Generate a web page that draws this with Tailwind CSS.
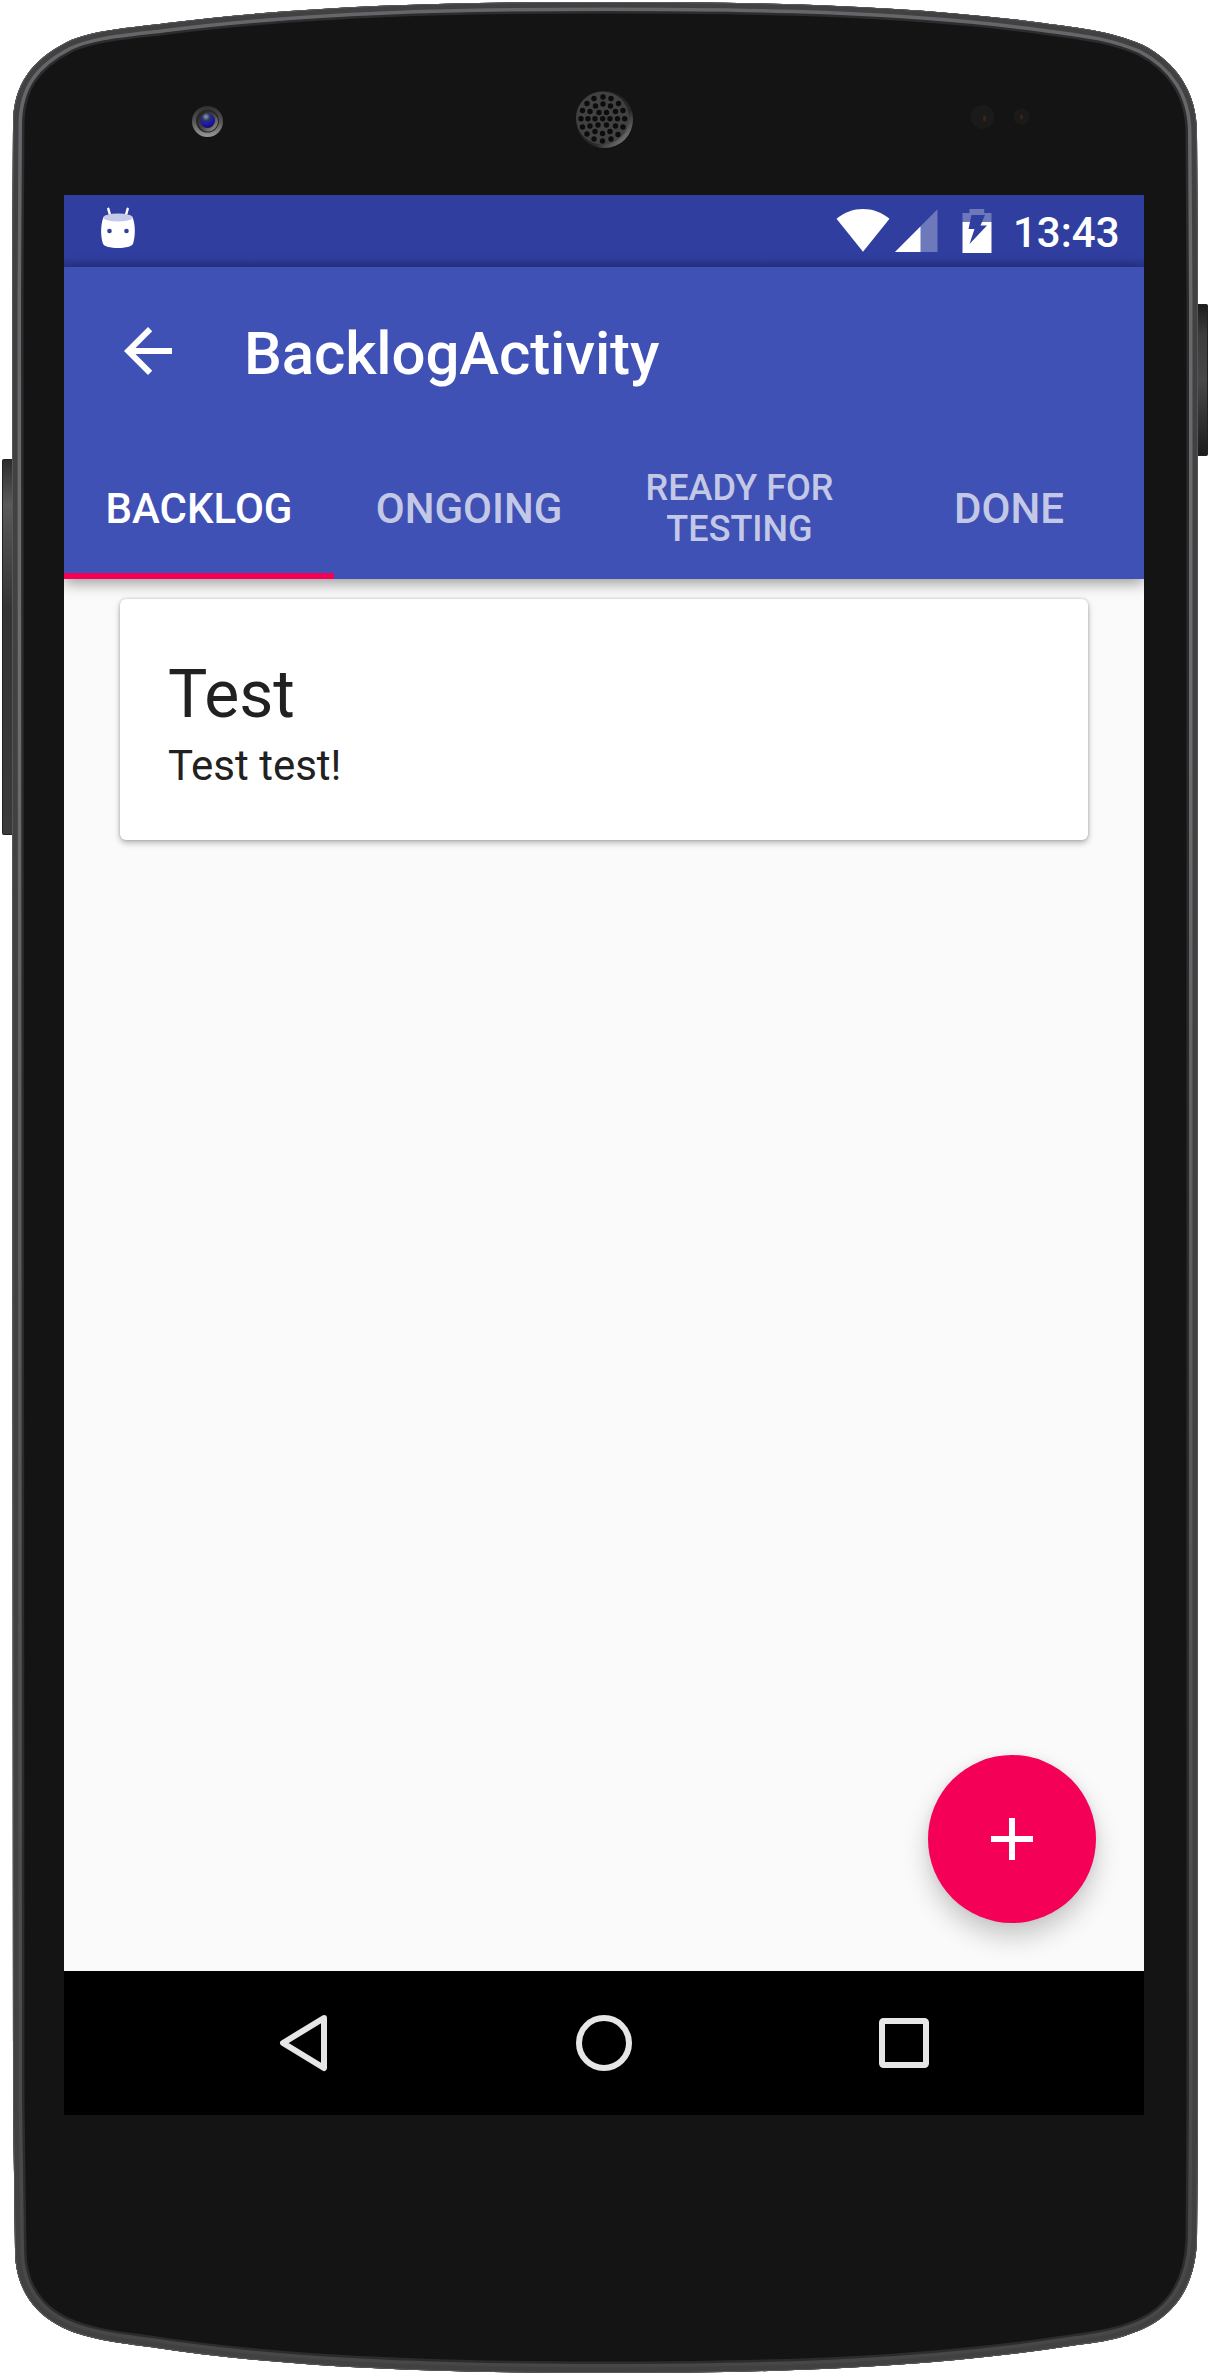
<!DOCTYPE html>
<html lang="en">
<head>
<meta charset="utf-8">
<title>BacklogActivity</title>
<script src="https://cdn.jsdelivr.net/npm/@tailwindcss/browser@4"></script>
</head>
<body class="bg-white font-[Roboto,sans-serif] overflow-hidden">
<div class="relative w-[1210px] h-[2375px] overflow-hidden px-16 pt-[195px]">
  <!-- Device shell -->
  <svg class="absolute left-0 top-0" width="1210" height="2375" viewBox="0 0 1210 2375" aria-hidden="true">
    <defs>
      <path id="shell" d="M12 300 L13 125 C13 84 32 60 67 42 C92 30 128 28 167 23 C310 5 460 2 605 2 C750 2 900 4 1043 23 C1078 28 1108 30 1143 45 C1176 62 1197 92 1197 133 L1198 300 V2100 L1197 2240 C1195 2292 1170 2321 1130 2334 C1112 2341 1092 2343 1077 2345 C930 2368 780 2373 605 2373 C430 2373 280 2367 150 2347 C128 2344 108 2342 90 2337 C46 2327 15 2299 15 2250 L13 2100 Z"/>
      <clipPath id="shellClip"><use href="#shell"/></clipPath>
      <linearGradient id="rim" x1="0" y1="0" x2="0" y2="1">
        <stop offset="0" stop-color="#66666a"/><stop offset=".3" stop-color="#6c6c71"/><stop offset=".75" stop-color="#505052"/><stop offset="1" stop-color="#474747"/>
      </linearGradient>
      <linearGradient id="key" x1="0" y1="0" x2="0" y2="1">
        <stop offset="0" stop-color="#2c2c2c"/><stop offset=".12" stop-color="#5a5a5a"/><stop offset=".4" stop-color="#333"/><stop offset="1" stop-color="#3a3a3a"/>
      </linearGradient>
      <linearGradient id="keyRight" x1="0" y1="0" x2="0" y2="1">
        <stop offset="0" stop-color="#1c1c1c"/><stop offset=".2" stop-color="#3c3c3c"/><stop offset=".5" stop-color="#484848"/><stop offset="1" stop-color="#1c1c1c"/>
      </linearGradient>
      <linearGradient id="cam" x1="0" y1="0" x2="0" y2="1">
        <stop offset="0" stop-color="#303030"/><stop offset=".5" stop-color="#555"/><stop offset="1" stop-color="#999"/>
      </linearGradient>
      <linearGradient id="camInner" x1="0" y1="0" x2="1" y2="1">
        <stop offset="0" stop-color="#1c1c1c"/><stop offset=".5" stop-color="#4a4542"/><stop offset="1" stop-color="#a39b94"/>
      </linearGradient>
      <radialGradient id="lens" cx=".4" cy=".25" r=".75">
        <stop offset="0" stop-color="#8fa0a8"/><stop offset=".35" stop-color="#2c3566"/><stop offset=".75" stop-color="#1a12b4"/><stop offset="1" stop-color="#17114a"/>
      </radialGradient>
      <linearGradient id="grille" x1="0" y1="0" x2="1" y2="1">
        <stop offset="0" stop-color="#161616"/><stop offset=".65" stop-color="#2a2a2a"/><stop offset="1" stop-color="#a0a0a0"/>
      </linearGradient>
    </defs>
    <rect x="2.500" y="459.500" width="12" height="375" rx="1" fill="url(#key)" stroke="#222" stroke-width="1"/>
    <rect x="1195.500" y="304.500" width="12" height="151" rx="1" fill="url(#keyRight)" stroke="#222" stroke-width="1"/>
    <use href="#shell" fill="#141414"/>
    <g clip-path="url(#shellClip)" fill="none">
      <use href="#shell" stroke="#2c2c2d" stroke-width="23"/>
      <use href="#shell" stroke="url(#rim)" stroke-width="18"/>
      <use href="#shell" stroke="#414142" stroke-width="11"/>
      <use href="#shell" stroke="#5c5c5e" stroke-width="1.500"/>
    </g>
    <circle cx="207.500" cy="121.500" r="15.500" fill="url(#cam)"/>
    <circle cx="207.500" cy="121" r="11.500" fill="#2a2826"/>
    <circle cx="208" cy="121.500" r="10" fill="url(#camInner)"/>
    <circle cx="207.500" cy="120.500" r="7.500" fill="url(#lens)"/>
    <circle cx="604.500" cy="119.500" r="28.500" fill="url(#grille)"/>
    <circle cx="602.500" cy="118" r="26.500" fill="#414141"/>
    <g fill="#0c0c0c">
      <circle cx="603" cy="97" r="2.700"/><circle cx="611" cy="98.500" r="2.700"/><circle cx="594" cy="98.500" r="2.700"/>
      <circle cx="587" cy="103.500" r="2.700"/><circle cx="618.500" cy="103.500" r="2.700"/><circle cx="603" cy="104" r="2.700"/>
      <circle cx="595.500" cy="106" r="2.700"/><circle cx="610.500" cy="106" r="2.700"/><circle cx="582.500" cy="110.500" r="2.700"/>
      <circle cx="590" cy="111.500" r="2.700"/><circle cx="599" cy="112.500" r="2.700"/><circle cx="606.500" cy="112.500" r="2.700"/>
      <circle cx="615.500" cy="111.500" r="2.700"/><circle cx="623" cy="110.500" r="2.700"/><circle cx="581" cy="118.700" r="2.700"/>
      <circle cx="588" cy="118.700" r="2.700"/><circle cx="595" cy="118.700" r="2.700"/><circle cx="602.700" cy="118.700" r="2.700"/>
      <circle cx="610" cy="118.700" r="2.700"/><circle cx="617.500" cy="118.700" r="2.700"/><circle cx="624.700" cy="118.700" r="2.700"/>
      <circle cx="582.500" cy="127" r="2.700"/><circle cx="590" cy="126" r="2.700"/><circle cx="598" cy="125" r="2.700"/>
      <circle cx="606.500" cy="125" r="2.700"/><circle cx="615.500" cy="126" r="2.700"/><circle cx="623" cy="127" r="2.700"/>
      <circle cx="595" cy="131.500" r="2.700"/><circle cx="610" cy="131.500" r="2.700"/><circle cx="587" cy="134" r="2.700"/>
      <circle cx="602.500" cy="133.500" r="2.700"/><circle cx="618" cy="134.500" r="2.700"/><circle cx="594" cy="139" r="2.700"/>
      <circle cx="602.500" cy="141" r="2.700"/><circle cx="611" cy="139" r="2.700"/>
    </g>
    <circle cx="982.500" cy="117" r="12" fill="#1a1a1a"/><ellipse cx="984.500" cy="118.500" rx="1.500" ry="3" fill="#3e2418"/>
    <circle cx="1021.500" cy="116.500" r="8" fill="#1a1a1a"/><ellipse cx="1021.500" cy="117" rx="1.500" ry="2.500" fill="#3e2418"/>
  </svg>

  <!-- Screen -->
  <main class="relative flex flex-col w-[1080px] h-[1920px] bg-[#fafafa] overflow-hidden">
    <div class="flex h-[72px] shrink-0 bg-[#303f9f] bg-linear-to-t from-[#28348a] to-[#303f9f] to-[10px] pl-9 pr-6 text-white">
      <svg class="w-9 h-[72px]" viewBox="100 195 36 72">
        <path d="M108.300 208.800l2 7M127.700 208.800l-2 7" stroke="#fff" stroke-width="2.400" stroke-linecap="round"/>
        <path d="M103.300 217.500c-2.800 8-2.800 18-.4 26 1.500 6 28.700 6 30.200 0 2.400-8 2.400-18-.4-26z" fill="#fff"/>
        <ellipse cx="118" cy="217.500" rx="14.800" ry="4" fill="#c5cae9"/>
        <circle cx="109.500" cy="231" r="2.300" fill="#303f9f"/><circle cx="126.500" cy="231" r="2.300" fill="#303f9f"/>
      </svg>
      <svg class="ml-auto w-[54px] h-[72px]" viewBox="836.500 195 54 72"><path d="M863.500 251.700 837 218.700C845 212.200 854 209 863.500 209s18.500 3.200 26.500 9.700z" fill="#fff"/></svg>
      <svg class="ml-[5px] w-[43px] h-[72px]" viewBox="895.500 195 43 72"><path d="M895.500 252 938 209.300V252z" fill="#fff" fill-opacity=".3"/><path d="M895.500 252 921 226.500V252z" fill="#fff"/></svg>
      <svg class="ml-[24px] w-[30px] h-[72px]" viewBox="962.500 195 30 72"><path d="M963 222v-9h7v-4h14.700v4h7.300v9z" fill="#fff" fill-opacity=".3"/><path d="M963 222h29v31h-29z" fill="#fff"/><path d="M972 215h13.500l-4.500 10.500h6.500l-17.500 18.500 5-15h-6z" fill="#303f9f"/></svg>
      <span class="ml-[21px] w-[107px] text-[42px] font-medium leading-[76px] whitespace-nowrap">13:43</span>
    </div>

    <header class="relative z-10 shrink-0 bg-[#3f51b5] text-white shadow-[0_4px_14px_rgba(0,0,0,.4)]">
      <div class="flex items-center h-[168px] pl-[60px]">
        <svg class="w-[48px] h-[48px]" viewBox="0 0 16 16"><path d="M16 7H3.830l5.590-5.590L8 0 0 8l8 8 1.410-1.410L3.830 9H16z" fill="#fff"/></svg>
        <h1 class="ml-[72px] pt-1.5 text-[60px] font-medium leading-[70px] tracking-[-0.12px]">BacklogActivity</h1>
      </div>
      <nav class="grid grid-cols-4 h-[144px] text-center text-[42px] font-medium leading-[50px] text-white/70">
        <a class="flex items-center justify-center border-b-6 border-[#f50057] pt-2.5 text-white">BACKLOG</a>
        <a class="flex items-center justify-center pt-1">ONGOING</a>
        <a class="flex items-center justify-center pt-1 pl-px text-[36px] leading-[41px]">READY FOR<br>TESTING</a>
        <a class="flex items-center justify-center pt-1">DONE</a>
      </nav>
    </header>

    <section class="flex-1 px-14 pt-5">
      <article class="h-[241px] w-[968px] rounded-md bg-white px-12 pt-[57px] text-[#212121] shadow-[0_3px_6px_rgba(0,0,0,.27),0_0_3px_rgba(0,0,0,.2)]">
        <h2 class="text-[66px] leading-[77px]">Test</h2>
        <p class="text-[42px] leading-[49px] mt-2">Test test!</p>
      </article>
    </section>

    <button class="absolute right-12 bottom-48 flex items-center justify-center size-[168px] rounded-full bg-[#f50057] shadow-[0_14px_26px_rgba(0,0,0,.2),0_0_10px_rgba(0,0,0,.06)]" aria-label="Add">
      <svg class="size-[42px]" viewBox="0 0 42 42"><path d="M18 0h6v18h18v6H24v18h-6V24H0v-6h18z" fill="#fff"/></svg>
    </button>

    <footer class="relative flex h-[144px] shrink-0 items-center justify-center gap-[247px] bg-black">
      <svg class="w-[50px] h-[60px]" viewBox="0 0 50 60"><path d="M45 5 4 30l41 25z" fill="none" stroke="#e6e6e6" stroke-width="6" stroke-linejoin="round"/></svg>
      <svg class="w-[56px] h-[56px]" viewBox="0 0 56 56"><circle cx="28" cy="28" r="25" fill="none" stroke="#e6e6e6" stroke-width="6"/></svg>
      <svg class="w-[50px] h-[50px]" viewBox="0 0 50 50"><rect x="3" y="3" width="44" height="44" rx="1.500" fill="none" stroke="#e6e6e6" stroke-width="6"/></svg>
    </footer>
  </main>
</div>
</body>
</html>
